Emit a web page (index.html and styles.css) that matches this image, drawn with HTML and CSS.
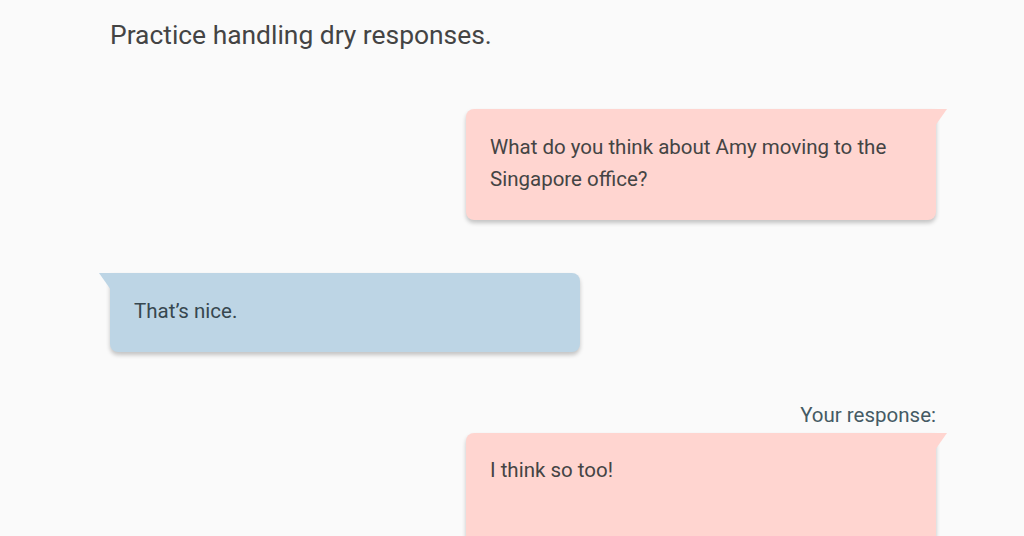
FILE: index.html
```html
<!DOCTYPE html>
<html>
<head>
<meta charset="utf-8">
<link rel="stylesheet" href="styles.css">
</head>
<body>
<main class="page">
  <h1 class="title">Practice handling dry responses.</h1>
  <div class="bubble bubble-me first">What do you think about Amy moving to the Singapore office?</div>
  <div class="bubble bubble-them">That’s nice.</div>
  <div class="label">Your response:</div>
  <div class="bubble bubble-me response">I think so too!</div>
</main>
</body>
</html>
```
FILE: styles.css
```css
html, body {
  margin: 0;
  padding: 0;
  background: #fafafa;
  height: 100%;
  overflow: hidden;
}
body {
  font-family: Roboto, "Liberation Sans", sans-serif;
  color: #444;
}
.page {
  width: 826px;
  margin-left: 110px;
  padding-top: 19px;
  display: flex;
  flex-direction: column;
}
.title {
  margin: 0;
  font-size: 26.4px;
  font-weight: 400;
  line-height: 32px;
  color: #444;
}
.bubble {
  position: relative;
  width: 470px;
  box-sizing: border-box;
  padding: 22px 24px 25px;
  font-size: 20.5px;
  line-height: 32px;
  border-radius: 8px;
  box-shadow: 0 3px 4px rgba(0, 0, 0, 0.22);
}
.bubble::after {
  content: "";
  position: absolute;
  top: 0;
  width: 12px;
  height: 17px;
}
.bubble-me {
  align-self: flex-end;
  background: #ffd5d0;
  border-top-right-radius: 0;
  color: #444;
}
.bubble-me::after {
  right: -11px;
  background: #ffd5d0;
  clip-path: polygon(0 0, 100% 0, 0 100%);
}
.bubble-them {
  align-self: flex-start;
  background: #bdd5e5;
  border-top-left-radius: 0;
  color: #37474f;
  margin-top: 53px;
}
.bubble-them::after {
  left: -11px;
  background: #bdd5e5;
  clip-path: polygon(0 0, 100% 0, 100% 100%);
}
.first {
  margin-top: 58px;
}
.label {
  align-self: flex-end;
  margin-top: 52px;
  font-size: 20.5px;
  line-height: 22px;
  color: #455a64;
}
.response {
  margin-top: 7px;
  padding-top: 21px;
  height: 200px;
}
```
